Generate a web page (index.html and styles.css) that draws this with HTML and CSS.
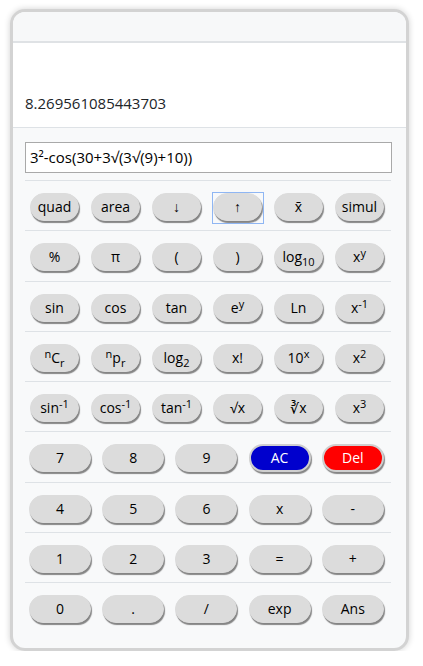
FILE: index.html
```html
<!DOCTYPE html>
<html>
<head>
<meta charset="utf-8">
<link rel="stylesheet" href="styles.css">
</head>
<body>
<div class="calc">
  <div class="calc-header"></div>
  <div class="display"><span class="result">8.269561085443703</span></div>
  <div class="calc-body">
    <input class="expr" type="text" value="3²-cos(30+3√(3√(9)+10))">
    <div class="keys six">
      <button class="key">quad</button>
      <button class="key">area</button>
      <button class="key">↓</button>
      <button class="key focus">↑</button>
      <button class="key">x̄</button>
      <button class="key">simul</button>
    </div>
    <div class="keys six">
      <button class="key">%</button>
      <button class="key">π</button>
      <button class="key">(</button>
      <button class="key">)</button>
      <button class="key">log<sub>10</sub></button>
      <button class="key">x<sup>y</sup></button>
    </div>
    <div class="keys six">
      <button class="key">sin</button>
      <button class="key">cos</button>
      <button class="key">tan</button>
      <button class="key">e<sup>y</sup></button>
      <button class="key">Ln</button>
      <button class="key">x<sup>-1</sup></button>
    </div>
    <div class="keys six">
      <button class="key"><sup>n</sup>C<sub>r</sub></button>
      <button class="key"><sup>n</sup>p<sub>r</sub></button>
      <button class="key">log<sub>2</sub></button>
      <button class="key">x!</button>
      <button class="key">10<sup>x</sup></button>
      <button class="key">x<sup>2</sup></button>
    </div>
    <div class="keys six">
      <button class="key">sin<sup>-1</sup></button>
      <button class="key">cos<sup>-1</sup></button>
      <button class="key">tan<sup>-1</sup></button>
      <button class="key">√x</button>
      <button class="key">∛x</button>
      <button class="key">x<sup>3</sup></button>
    </div>
    <div class="keys five">
      <button class="key">7</button>
      <button class="key">8</button>
      <button class="key">9</button>
      <button class="key ac">AC</button>
      <button class="key del">Del</button>
    </div>
    <div class="keys five">
      <button class="key">4</button>
      <button class="key">5</button>
      <button class="key">6</button>
      <button class="key">x</button>
      <button class="key">-</button>
    </div>
    <div class="keys five">
      <button class="key">1</button>
      <button class="key">2</button>
      <button class="key">3</button>
      <button class="key">=</button>
      <button class="key">+</button>
    </div>
    <div class="keys five">
      <button class="key">0</button>
      <button class="key">.</button>
      <button class="key">/</button>
      <button class="key">exp</button>
      <button class="key">Ans</button>
    </div>
  </div>
</div>
</body>
</html>
```
FILE: styles.css
```css
* { box-sizing: border-box; }
html, body { margin: 0; padding: 0; background: #fff; }
body {
  font-family: "Open Sans", "Noto Sans", sans-serif;
  color: #212529;
  padding: 9px 0 0 10px;
}
.calc {
  width: 399px;
  height: 642px;
  border: 3px solid #d3d3d3;
  border-radius: 15px;
  background: #f8f9fa;
  box-shadow: 0 0 6px rgba(0,0,0,0.18);
  overflow: hidden;
}
.calc-header {
  height: 31px;
  background: #f7f8f9;
  border-bottom: 2px solid #dfe2e5;
}
.display {
  height: 85px;
  background: #fff;
  border-bottom: 1px solid #dee2e6;
  display: flex;
  align-items: flex-end;
  padding: 0 12px 14px;
}
.result {
  font-size: 15px;
  line-height: 20px;
  color: #212529;
}
.calc-body {
  padding: 14px 14px 0 12px;
}
.expr {
  display: block;
  width: 367px;
  height: 31px;
  margin: 0 0 7px 0;
  border: 1px solid #a9a9a9;
  background: #fff;
  padding: 0 4px 1px;
  font-family: "Open Sans", "Noto Sans", sans-serif;
  font-size: 15px;
  color: #000;
  outline: none;
}
.keys {
  display: grid;
  width: 366px;
  border-top: 1px solid #dee2e6;
  padding: 12px 0 9.25px;
}
.six { grid-template-columns: repeat(6, 1fr); }
.five { grid-template-columns: repeat(5, 1fr); }
.key {
  position: relative;
  height: 28px;
  border: 1px solid #dcdcdc;
  border-radius: 14px;
  background: #dcdcdc;
  box-shadow: 1px 2px 1px #858585;
  font-family: "Open Sans", "Noto Sans", sans-serif;
  font-size: 14px;
  line-height: 18px;
  color: #000;
  padding: 0;
  text-align: center;
}
.six .key { width: 49px; margin-left: 5px; }
.five .key { width: 62px; margin-left: 4px; }
.key sup, .key sub {
  font-size: 11px;
  line-height: 0;
}
.key sup { vertical-align: 5px; }
.key sub { vertical-align: -4px; }
.key.ac { background: #0000cd; color: #fff; border: 2px solid #cfcfcf; }
.key.del { background: #ff0000; color: #fff; border: 2px solid #cfcfcf; }
.key.focus::after {
  content: "";
  position: absolute;
  left: -2px;
  top: -2px;
  right: -3px;
  bottom: -4px;
  border: 1.5px solid #8fb6f3;
}
```
